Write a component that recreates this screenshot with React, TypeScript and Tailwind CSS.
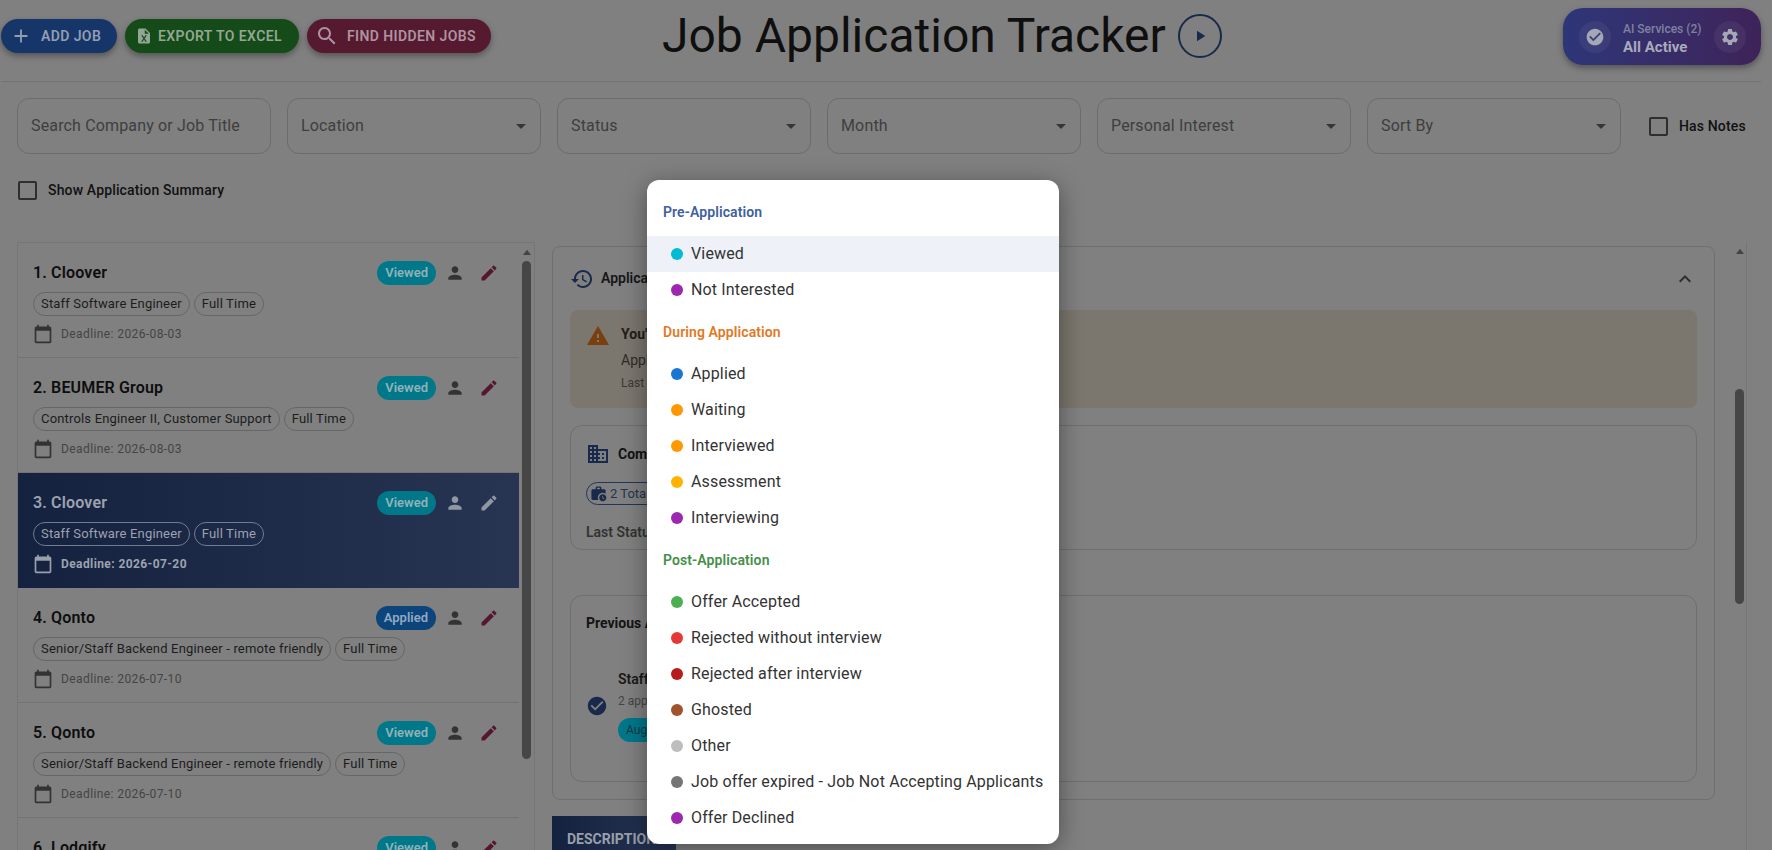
import React from "react";

const P = {
  person: "M12 12c2.21 0 4-1.79 4-4s-1.79-4-4-4-4 1.79-4 4 1.79 4 4 4zm0 2c-2.67 0-8 1.34-8 4v2h16v-2c0-2.66-5.33-4-8-4z",
  edit: "M3 17.25V21h3.75L17.81 9.94l-3.75-3.75L3 17.25zM20.71 7.04c.39-.39.39-1.02 0-1.41l-2.34-2.34a.9959.9959 0 0 0-1.41 0l-1.83 1.83 3.75 3.75 1.83-1.83z",
  cal: "M20 3h-1V1h-2v2H7V1H5v2H4c-1.1 0-2 .9-2 2v16c0 1.1.9 2 2 2h16c1.1 0 2-.9 2-2V5c0-1.1-.9-2-2-2zm0 18H4V8h16v13z",
  add: "M19 13h-6v6h-2v-6H5v-2h6V5h2v6h6v2z",
  search: "M15.5 14h-.79l-.28-.27C15.41 12.59 16 11.11 16 9.5 16 5.91 13.09 3 9.5 3S3 5.91 3 9.5 5.91 16 9.5 16c1.61 0 3.09-.59 4.23-1.57l.27.28v.79l5 4.99L20.49 19l-4.99-5zm-6 0C7.01 14 5 11.99 5 9.5S7.01 5 9.5 5 14 7.01 14 9.5 11.99 14 9.5 14z",
  history: "M13 3c-4.97 0-9 4.03-9 9H1l3.89 3.89.07.14L9 12H6c0-3.87 3.13-7 7-7s7 3.13 7 7-3.13 7-7 7c-1.93 0-3.68-.79-4.94-2.06l-1.42 1.42C8.27 19.99 10.51 21 13 21c4.97 0 9-4.03 9-9s-4.03-9-9-9zm-1 5v5l4.28 2.54.72-1.21-3.5-2.08V8H12z",
  warning: "M1 21h22L12 2 1 21zm12-3h-2v-2h2v2zm0-4h-2v-4h2v4z",
  business: "M12 7V3H2v18h20V7H12zM6 19H4v-2h2v2zm0-4H4v-2h2v2zm0-4H4V9h2v2zm0-4H4V5h2v2zm4 12H8v-2h2v2zm0-4H8v-2h2v2zm0-4H8V9h2v2zm0-4H8V5h2v2zm10 12h-8v-2h2v-2h-2v-2h2v-2h-2V9h8v10zm-2-8h-2v2h2v-2zm0 4h-2v2h2v-2z",
  less: "M12 8l-6 6 1.41 1.41L12 10.83l4.59 4.58L18 14z",
  check: "M12 2C6.48 2 2 6.48 2 12s4.48 10 10 10 10-4.48 10-10S17.52 2 12 2zm-2 15l-5-5 1.41-1.41L10 14.17l7.59-7.59L19 8l-9 9z",
  settings: "M19.14 12.94c.04-.3.06-.61.06-.94 0-.32-.02-.64-.07-.94l2.03-1.58c.18-.14.23-.41.12-.61l-1.92-3.32c-.12-.22-.37-.29-.59-.22l-2.39.96c-.5-.38-1.03-.7-1.62-.94l-.36-2.54c-.04-.24-.24-.41-.48-.41h-3.84c-.24 0-.43.17-.47.41l-.36 2.54c-.59.24-1.13.57-1.62.94l-2.39-.96c-.22-.08-.47 0-.59.22L2.74 8.87c-.12.21-.08.47.12.61l2.03 1.58c-.05.3-.09.63-.09.94s.02.64.07.94l-2.03 1.58c-.18.14-.23.41-.12.61l1.92 3.32c.12.22.37.29.59.22l2.39-.96c.5.38 1.03.7 1.62.94l.36 2.54c.05.24.24.41.48.41h3.84c.24 0 .44-.17.47-.41l.36-2.54c.59-.24 1.13-.56 1.62-.94l2.39.96c.22.08.47 0 .59-.22l1.92-3.32c.12-.22.07-.47-.12-.61l-2.01-1.58zM12 15.6c-1.98 0-3.6-1.62-3.6-3.6s1.62-3.6 3.6-3.6 3.6 1.62 3.6 3.6-1.62 3.6-3.6 3.6z",
  play: "M8 5v14l11-7z",
  drop: "M7 10l5 5 5-5z",
  up: "M12 7l-6 8h12z",
  work: "M18 11c1.49 0 2.87.47 4 1.26V8c0-1.11-.89-2-2-2h-4V4c0-1.11-.89-2-2-2h-4c-1.11 0-2 .89-2 2v2H4c-1.11 0-1.99.89-1.99 2L2 19c0 1.11.89 2 2 2h7.68c-.43-.91-.68-1.92-.68-3 0-3.87 3.13-7 7-7zm-8-7h4v2h-4V4z M18 13c-2.76 0-5 2.24-5 5s2.24 5 5 5 5-2.24 5-5-2.24-5-5-5zm1.65 7.35L17.5 18.2V15h1v2.79l1.85 1.85-.7.71z",
  excel: "M6 2c-1.1 0-2 .9-2 2v16c0 1.1.9 2 2 2h12c1.1 0 2-.9 2-2V8l-6-6H6zm7 1.5L18.5 9H13V3.5zM8.2 11h2l1.8 3 1.8-3h2l-2.8 4.2 2.8 4.3h-2L12 16.4l-1.8 3.1h-2l2.8-4.3L8.2 11z",
};

function Icon({ d, className }: { d: string; className: string }) {
  return (
    <svg viewBox="0 0 24 24" fill="currentColor" fillRule="evenodd" className={className}>
      <path d={d} />
    </svg>
  );
}

function Field({ label, arrow = true }: { label: string; arrow?: boolean }) {
  return (
    <div className="flex h-[56px] w-[254px] shrink-0 items-center justify-between rounded-[12px] border border-[#6c6c6c] pl-[13px] pr-[7px]">
      <span className="text-[16px] tracking-[0.15px] text-[#3e3e3e]">{label}</span>
      {arrow && <Icon d={P.drop} className="h-[24px] w-[24px] text-[#363636]" />}
    </div>
  );
}

function Box({ label }: { label: string }) {
  return (
    <div className="flex items-center gap-[11px]">
      <div className="h-[19px] w-[19px] rounded-[2px] border-2 border-[#2e2e2e]" />
      <span className="text-[14px] font-medium tracking-[0.15px] text-[#111111]">{label}</span>
    </div>
  );
}

type Job = { t: string; role: string; date: string; status: string; active?: boolean };
const jobs: Job[] = [
  { t: "1. Cloover", role: "Staff Software Engineer", date: "2026-08-03", status: "Viewed" },
  { t: "2. BEUMER Group", role: "Controls Engineer II, Customer Support", date: "2026-08-03", status: "Viewed" },
  { t: "3. Cloover", role: "Staff Software Engineer", date: "2026-07-20", status: "Viewed", active: true },
  { t: "4. Qonto", role: "Senior/Staff Backend Engineer - remote friendly", date: "2026-07-10", status: "Applied" },
  { t: "5. Qonto", role: "Senior/Staff Backend Engineer - remote friendly", date: "2026-07-10", status: "Viewed" },
  { t: "6. Lodgify", role: "Senior Software Engineer", date: "2026-07-10", status: "Viewed" },
];

function JobRow({ j }: { j: Job }) {
  const a = j.active;
  const chip = `flex h-[24px] items-center rounded-full border px-[7px] text-[13px] tracking-[0.17px] ${a ? "border-[#737b92] text-[#9da2af]" : "border-[#666666] text-[#1c1c1c]"}`;
  return (
    <div className={`h-[115px] shrink-0 pl-[15px] pr-[20px] pt-[18px] ${a ? "bg-gradient-to-r from-[#14213f] to-[#273553]" : "border-b border-[#737373]"}`}>
      <div className="flex h-[24px] items-center justify-between">
        <span className={`text-[16px] font-semibold tracking-[0.15px] ${a ? "text-[#9da2af]" : "text-[#0e0e0e]"}`}>{j.t}</span>
        <div className="flex items-center">
          <span className={`flex h-[24px] items-center rounded-full px-[8px] text-[13px] font-semibold ${j.status === "Applied" ? "bg-[#0c447c] text-[#93a9c0]" : "bg-[#00788a] text-[#92b2b7]"}`}>{j.status}</span>
          <Icon d={P.person} className={`ml-[9px] h-[20px] w-[20px] ${a ? "text-[#9196a3]" : "text-[#333333]"}`} />
          <Icon d={P.edit} className={`ml-[14px] h-[20px] w-[20px] ${a ? "text-[#9196a3]" : "text-[#551630]"}`} />
        </div>
      </div>
      <div className="mt-[7px] flex gap-[4px]">
        <span className={chip}>{j.role}</span>
        <span className={chip}>Full Time</span>
      </div>
      <div className="mt-[8px] flex h-[20px] items-center">
        <Icon d={P.cal} className={`h-[20px] w-[20px] ${a ? "text-[#9a9fac]" : "text-[#333333]"}`} />
        <span className={`ml-[8px] text-[12px] tracking-[0.4px] ${a ? "font-bold text-[#9da2af]" : "text-[#444444]"}`}>Deadline: {j.date}</span>
      </div>
    </div>
  );
}

function Track({ top, height }: { top: string; height: string }) {
  return (
    <div className="flex h-full w-[15px] shrink-0 flex-col items-center">
      <Icon d={P.up} className="mt-[2px] h-[16px] w-[16px] text-[#444444]" />
      <div className={`w-[9px] rounded-full bg-[#464646] ${top} ${height}`} />
    </div>
  );
}

type Item = { l: string; c: string; hi?: boolean };
const groups: { label: string; color: string; items: Item[] }[] = [
  {
    label: "Pre-Application",
    color: "text-[#3f5f9f]",
    items: [
      { l: "Viewed", c: "bg-[#00bcd4]", hi: true },
      { l: "Not Interested", c: "bg-[#9c27b0]" },
    ],
  },
  {
    label: "During Application",
    color: "text-[#e2791f]",
    items: [
      { l: "Applied", c: "bg-[#1976d2]" },
      { l: "Waiting", c: "bg-[#ff9800]" },
      { l: "Interviewed", c: "bg-[#ff9800]" },
      { l: "Assessment", c: "bg-[#ffb300]" },
      { l: "Interviewing", c: "bg-[#9c27b0]" },
    ],
  },
  {
    label: "Post-Application",
    color: "text-[#458f4a]",
    items: [
      { l: "Offer Accepted", c: "bg-[#4caf50]" },
      { l: "Rejected without interview", c: "bg-[#e53935]" },
      { l: "Rejected after interview", c: "bg-[#b71c1c]" },
      { l: "Ghosted", c: "bg-[#a0522d]" },
      { l: "Other", c: "bg-[#bdbdbd]" },
      { l: "Job offer expired - Job Not Accepting Applicants", c: "bg-[#757575]" },
      { l: "Offer Declined", c: "bg-[#9c27b0]" },
    ],
  },
];

export default function App() {
  return (
    <div className="relative flex h-[850px] w-[1772px] flex-col overflow-hidden bg-[#808080] font-['Roboto',sans-serif]">
      <header className="ml-[1px] mr-[11px] flex h-[82px] shrink-0 items-start border-b border-[#747474]">
        <div className="mt-[19px] flex gap-[8px]">
          <div className="flex h-[34px] w-[116px] items-center gap-[9px] rounded-full bg-[#163669] pl-[9px] text-[14px] font-semibold tracking-[0.4px] text-[#929db1] shadow-[0_3px_6px_rgba(0,0,0,0.35)]">
            <Icon d={P.add} className="h-[22px] w-[22px]" />ADD JOB
          </div>
          <div className="flex h-[34px] w-[174px] items-center gap-[5px] rounded-full bg-[#154a19] pl-[10px] text-[14px] font-semibold tracking-[0.4px] text-[#92a793] shadow-[0_3px_6px_rgba(0,0,0,0.35)]">
            <Icon d={P.excel} className="h-[18px] w-[18px]" />EXPORT TO EXCEL
          </div>
          <div className="flex h-[34px] w-[184px] items-center gap-[8px] rounded-full bg-[#551a30] pl-[8px] text-[14px] font-semibold tracking-[0.4px] text-[#af929f] shadow-[0_3px_6px_rgba(0,0,0,0.35)]">
            <Icon d={P.search} className="h-[24px] w-[24px]" />FIND HIDDEN JOBS
          </div>
        </div>
        <h1 className="ml-[171px] mt-[8px] text-[48px] font-normal leading-[56px] text-[#0f0f0f]">Job Application Tracker</h1>
        <div className="ml-[12px] mt-[14px] flex h-[44px] w-[44px] items-center justify-center rounded-full border-2 border-[#18294b] text-[#18294b]">
          <Icon d={P.play} className="h-[18px] w-[18px]" />
        </div>
        <div className="ml-auto mt-[8px] flex h-[57px] w-[198px] items-center rounded-[20px] bg-gradient-to-r from-[#2d3678] to-[#3e2359] pl-[16px] shadow-[0_3px_6px_rgba(0,0,0,0.35)]">
          <div className="flex h-[32px] w-[32px] items-center justify-center rounded-full bg-white/5 text-[#a5a7b6]">
            <Icon d={P.check} className="h-[20px] w-[20px]" />
          </div>
          <div className="ml-[12px] mt-[4px] w-[91px]">
            <div className="text-[12px] leading-[16px] font-medium text-[#7f81a0]">AI Services (2)</div>
            <div className="text-[15px] leading-[20px] font-bold text-[#a8aabc]">All Active</div>
          </div>
          <div className="flex h-[32px] w-[32px] items-center justify-center rounded-full bg-white/5 text-[#a5a7b6]">
            <Icon d={P.settings} className="h-[20px] w-[20px]" />
          </div>
        </div>
      </header>

      <div className="ml-[17px] mt-[16px] flex h-[56px] shrink-0 items-center gap-[16px]">
        <Field label="Search Company or Job Title" arrow={false} />
        <Field label="Location" />
        <Field label="Status" />
        <Field label="Month" />
        <Field label="Personal Interest" />
        <Field label="Sort By" />
        <div className="ml-[12px]"><Box label="Has Notes" /></div>
      </div>

      <div className="ml-[18px] mt-[27px] flex h-[19px] shrink-0 items-center">
        <Box label="Show Application Summary" />
      </div>

      <div className="mt-[42px] flex min-h-0 flex-1">
        <aside className="ml-[17px] flex w-[518px] shrink-0 border border-b-0 border-[#767676]">
          <div className="flex min-w-0 flex-1 flex-col overflow-hidden">
            {jobs.map((j) => <JobRow key={j.t} j={j} />)}
          </div>
          <Track top="mt-[0px]" height="h-[498px]" />
        </aside>

        <main className="mr-[25px] flex min-w-0 flex-1 border-r border-[#767676]">
          <div className="ml-[17px] w-[1163px] shrink-0">
            <section className="mt-[4px] h-[554px] rounded-[8px] border border-[#6f6f6f] px-[17px]">
              <div className="flex h-[63px] items-center">
                <Icon d={P.history} className="h-[24px] w-[24px] text-[#18294b]" />
                <span className="ml-[7px] text-[14px] font-semibold text-[#161616]">Application History</span>
                <Icon d={P.less} className="ml-auto h-[24px] w-[24px] text-[#2e2e2e]" />
              </div>
              <div className="h-[98px] rounded-[8px] bg-[#7b766e] pl-[16px] pt-[14px]">
                <div className="flex">
                  <Icon d={P.warning} className="h-[24px] w-[24px] text-[#7a3f0e]" />
                  <div className="ml-[11px]">
                    <div className="text-[14px] leading-[20px] font-bold text-[#241d16]">You&apos;ve already applied</div>
                    <div className="mt-[6px] text-[14px] leading-[20px] text-[#2e2b27]">Applied to this position</div>
                    <div className="mt-[4px] text-[12px] leading-[18px] text-[#3d3a35]">Last status update</div>
                  </div>
                </div>
              </div>
              <div className="mt-[17px] h-[125px] rounded-[12px] border border-[#6f6f6f] px-[15px] pt-[16px]">
                <div className="flex items-center">
                  <Icon d={P.business} className="h-[24px] w-[24px] text-[#18294b]" />
                  <span className="ml-[8px] text-[14px] font-bold text-[#131313]">Company History</span>
                </div>
                <div className="mt-[16px] flex h-[23px] w-fit items-center rounded-full border border-[#22355c] pl-[3px] pr-[8px] text-[13px] text-[#25344f]">
                  <Icon d={P.work} className="h-[17px] w-[17px] text-[#18294b]" />
                  <span className="ml-[3px]">2 Total Applications</span>
                </div>
                <div className="mt-[17px] text-[14px] font-semibold leading-[20px] text-[#333333]">Last Status: Viewed</div>
              </div>
              <div className="mt-[45px] h-[187px] rounded-[12px] border border-[#6f6f6f] px-[15px] pt-[17px]">
                <div className="text-[14px] font-bold leading-[20px] text-[#131313]">Previous Applications</div>
                <div className="mt-[36px] flex items-center">
                  <Icon d={P.check} className="h-[22px] w-[22px] text-[#18294b]" />
                  <div className="ml-[10px]">
                    <div className="text-[14px] font-semibold leading-[20px] text-[#191919]">Staff Software Engineer</div>
                    <div className="mt-[3px] text-[12px] leading-[18px] text-[#454545]">2 applications</div>
                    <span className="mt-[8px] flex h-[24px] w-fit items-center rounded-full bg-[#00788a] px-[8px] text-[12px] text-[#0e3a42]">Aug 2026</span>
                  </div>
                </div>
              </div>
            </section>
            <div className="mt-[16px] flex h-[46px] w-[124px] items-center bg-gradient-to-r from-[#14213f] to-[#273553] pl-[15px] text-[14px] font-bold text-[#9a9fac]">DESCRIPTION</div>
          </div>
          <div className="ml-[17px]"><Track top="mt-[129px]" height="h-[215px]" /></div>
        </main>
      </div>

      <div className="absolute left-[647px] top-[180px] w-[412px] rounded-[12px] bg-white py-[8px] shadow-[0_5px_24px_rgba(0,0,0,0.4)]">
        {groups.map((g) => (
          <div key={g.label}>
            <div className={`flex h-[48px] items-center pl-[16px] text-[14px] font-semibold tracking-[0.1px] ${g.color}`}>{g.label}</div>
            {g.items.map((i) => (
              <div key={i.l} className={`flex h-[36px] items-center pl-[24px] ${i.hi ? "bg-[#eef1f8]" : ""}`}>
                <span className={`h-[12px] w-[12px] rounded-full ${i.c}`} />
                <span className="ml-[8px] whitespace-nowrap text-[16px] tracking-[0.15px] text-[#333333]">{i.l}</span>
              </div>
            ))}
          </div>
        ))}
      </div>
    </div>
  );
}
